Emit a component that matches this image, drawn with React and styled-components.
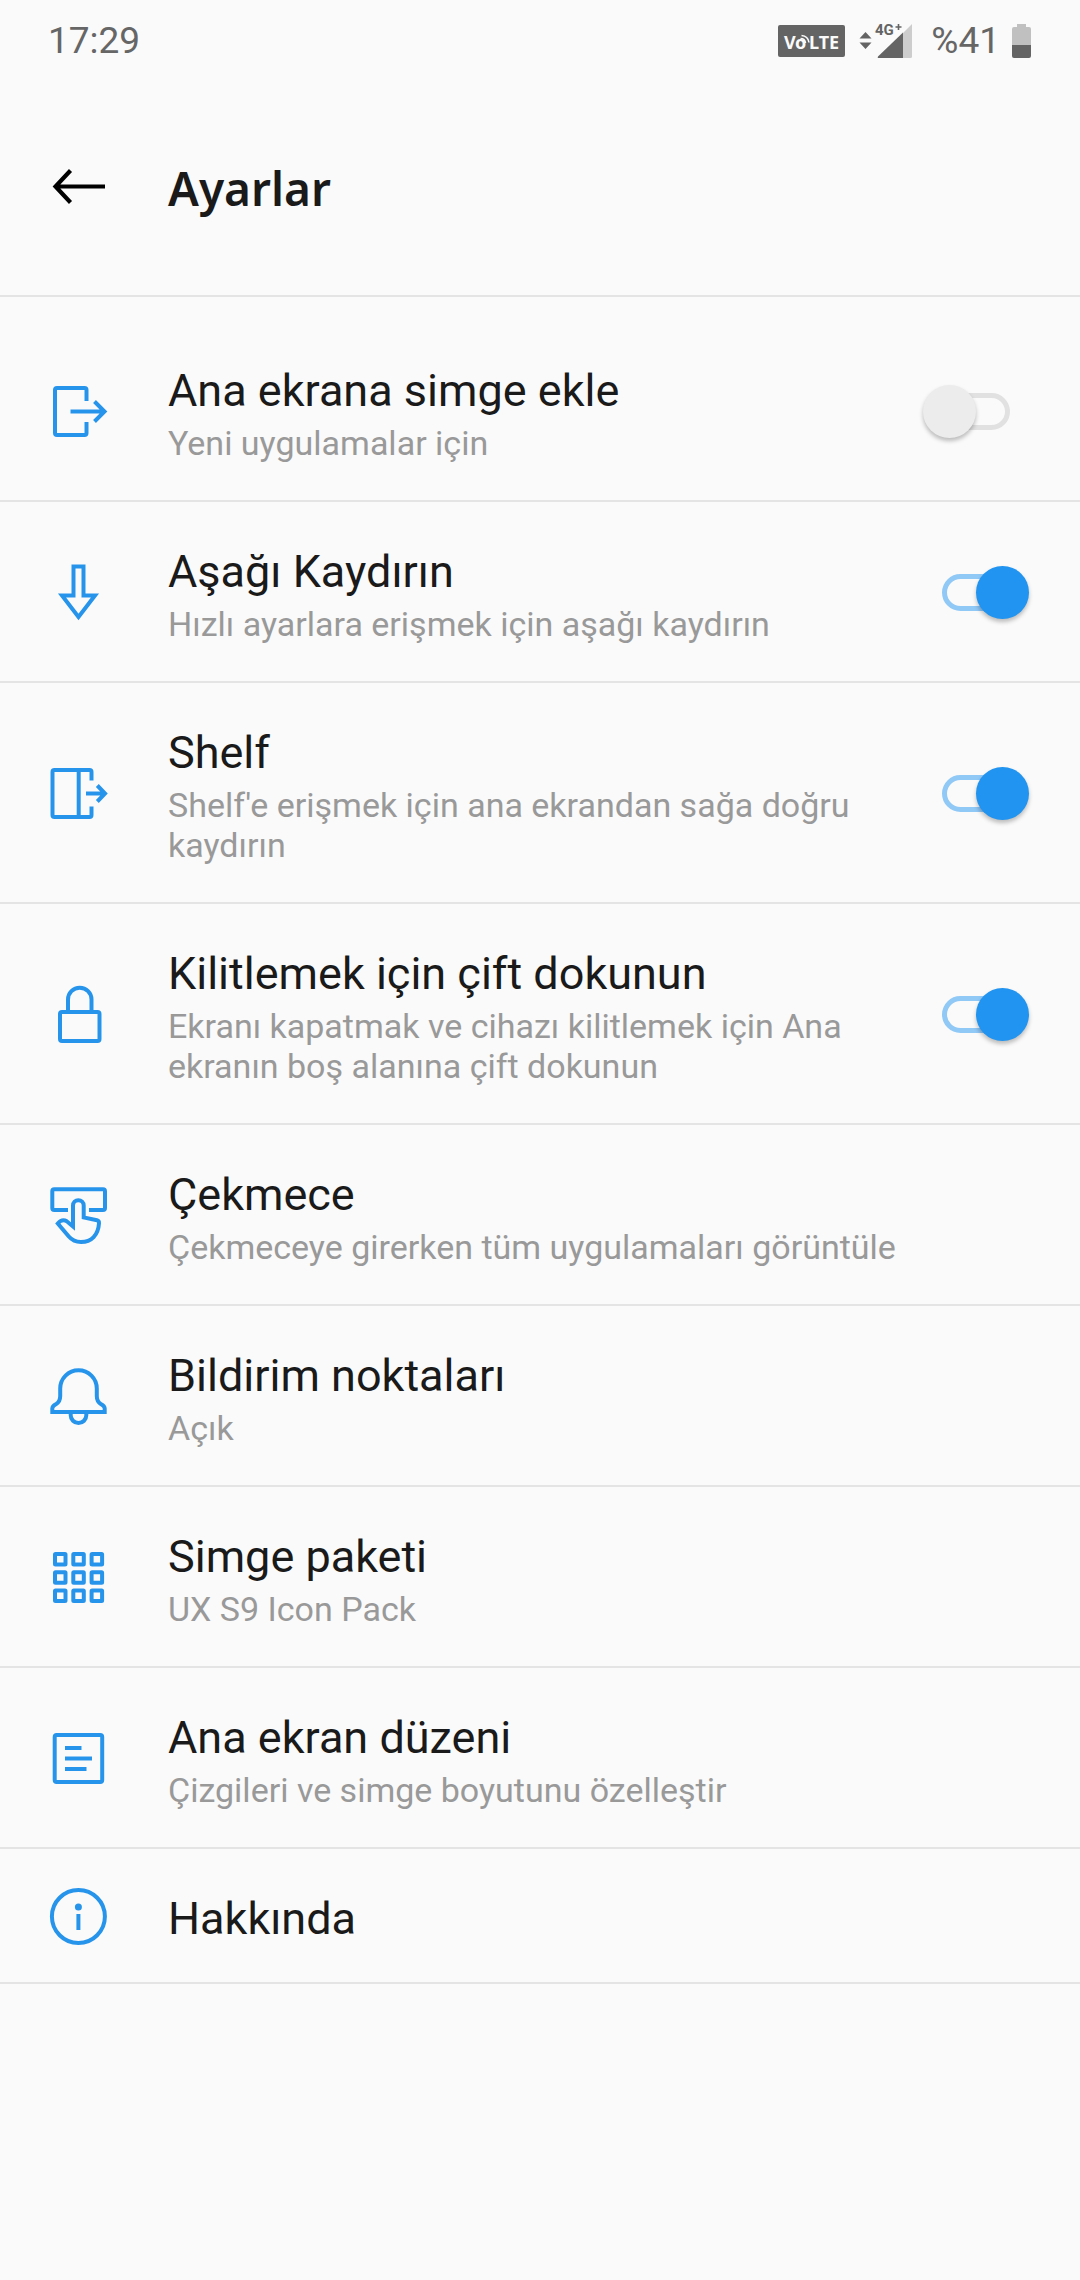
import { useState } from "react";
import styled, { createGlobalStyle } from "styled-components";

const settings = [
  {
    id: "add-icon",
    icon: "exit",
    title: "Ana ekrana simge ekle",
    summary: "Yeni uygulamalar için",
    toggle: true,
    enabled: false,
  },
  {
    id: "swipe-down",
    icon: "arrowDown",
    title: "Aşağı Kaydırın",
    summary: "Hızlı ayarlara erişmek için aşağı kaydırın",
    toggle: true,
    enabled: true,
  },
  {
    id: "shelf",
    icon: "shelf",
    title: "Shelf",
    summary: "Shelf'e erişmek için ana ekrandan sağa doğru kaydırın",
    toggle: true,
    enabled: true,
  },
  {
    id: "double-tap",
    icon: "lock",
    title: "Kilitlemek için çift dokunun",
    summary:
      "Ekranı kapatmak ve cihazı kilitlemek için Ana ekranın boş alanına çift dokunun",
    toggle: true,
    enabled: true,
  },
  {
    id: "drawer",
    icon: "drawer",
    title: "Çekmece",
    summary: "Çekmeceye girerken tüm uygulamaları görüntüle",
  },
  {
    id: "dots",
    icon: "bell",
    title: "Bildirim noktaları",
    summary: "Açık",
  },
  {
    id: "icon-pack",
    icon: "grid",
    title: "Simge paketi",
    summary: "UX S9 Icon Pack",
  },
  {
    id: "layout",
    icon: "layout",
    title: "Ana ekran düzeni",
    summary: "Çizgileri ve simge boyutunu özelleştir",
  },
  { id: "about", icon: "info", title: "Hakkında" },
];

const gridOffsets = [10, 28.3, 46.6];

const iconShapes = {
  exit: (
    <>
      <path d="M41.5 24V13q0-2-2-2H12q-2 0-2 2v43q0 2 2 2h27.500q2 0 2-2V45" />
      <path d="M25.500 34.500H59.500M49.500 24.500L59.500 34.500L49.500 44.500" />
    </>
  ),
  arrowDown: <path d="M28.500 8.500h10v29H50L33.500 59L17 37.500h11.500z" />,
  shelf: (
    <>
      <path d="M46.500 21.500V13q0-2-2-2h-35q-2 0-2 2v43q0 2 2 2h35q2 0 2-2v-8.500M33.700 11v47" />
      <path d="M41 34.500H59.500M52.300 26.500L60 34.500L52.300 42.500" />
    </>
  ),
  lock: (
    <>
      <rect x="15" y="32" width="39.500" height="29" rx="2" />
      <path d="M23 32V19.500a11.750 11.750 0 0 1 23.500 0V32" />
    </>
  ),
  drawer: (
    <>
      <path d="M23 29H9.300q-2 0-2-2V10.300q0-2 2-2H58q2 0 2 2V27q0 2-2 2H44" />
      <path d="M28 45.500V24.500a5.300 5.300 0 0 1 10.700 0V36.500L52 39.300q2.200.5 2 3C53.200 54 46.500 61 36 61c-5 0-9.200-2-12.200-5.500L12.800 42.500q4.200-5 9-2.200z" />
    </>
  ),
  bell: (
    <>
      <path d="M15.200 26.500V34q0 5.500-4 8q-3.900 2-3.900 4.500V50H59.700V46.500q0-2.500-3.900-4.500q-4-2.500-4-8V26.500a18.300 18.300 0 0 0-36.600 0z" />
      <path d="M25.700 51v2.200a7.800 7.800 0 0 0 15.600 0V51" />
    </>
  ),
  grid: gridOffsets.map((y) =>
    gridOffsets.map((x) => (
      <rect key={`${x}-${y}`} x={x} y={y + 1} width="10.500" height="10.500" rx="0.500" />
    ))
  ),
  layout: (
    <>
      <rect x="9.700" y="11" width="47.500" height="47" rx="2" />
      <path d="M20 24h16.500M20 34.500h27M20 45h21.500" />
    </>
  ),
  info: (
    <>
      <circle cx="33.400" cy="34.500" r="26.500" />
      <path d="M33.400 32v16" />
      <circle cx="33.400" cy="25" r="3.500" fill="currentColor" stroke="none" />
    </>
  ),
};

function StatusIcons() {
  return (
    <StyledStatusGroup>
      <svg width="67" height="34" viewBox="0 0 67 34" role="img" aria-label="VoLTE">
        <rect x="0" y="1" width="67" height="32" rx="2" fill="#646464" />
        <StyledVolteText x="6" y="25">V</StyledVolteText>
        <StyledVolteText x="17" y="25">o</StyledVolteText>
        <StyledVolteText x="31" y="25">LTE</StyledVolteText>
        <path
          d="M22.500 14.500q4.500 0 5 4.500M23.500 11.500q6.500 .5 7.500 7"
          fill="none"
          stroke="#fafafa"
          strokeWidth="1.600"
        />
      </svg>
      <StyledSignal width="53" height="44" viewBox="0 -4 53 44" role="img" aria-label="4G+">
        <path d="M6.500 9l6 6.500h-12zM6.500 26l6-6.500h-12z" fill="#646464" />
        <path d="M53 1v32.500q0 1.500-1.500 1.500H44V10z" fill="#cdcdcd" />
        <path d="M44 9.500V35H20q-2 0-1-1.500z" fill="#646464" />
        <StyledNetworkText x="16" y="12">4G</StyledNetworkText>
        <path d="M39.500 1v6M36.500 4h6" stroke="#646464" strokeWidth="1.600" />
      </StyledSignal>
      <StyledStatusText>%41</StyledStatusText>
      <StyledBattery width="19" height="34" viewBox="0 0 19 34" role="img" aria-label="Pil">
        <path d="M5 0h9v3h3q2 0 2 2v16H0V5q0-2 2-2h3z" fill="#c0c0c0" />
        <path d="M0 21h19v11q0 2-2 2H2q-2 0-2-2z" fill="#646464" />
      </StyledBattery>
    </StyledStatusGroup>
  );
}

function SettingItem({ setting, checked, onToggle }) {
  const content = (
    <>
      <StyledIcon viewBox="0 0 66 67" aria-hidden="true">
        {iconShapes[setting.icon]}
      </StyledIcon>
      <StyledItemText>
        <StyledItemTitle>{setting.title}</StyledItemTitle>
        {setting.summary && <StyledItemSummary>{setting.summary}</StyledItemSummary>}
      </StyledItemText>
    </>
  );

  if (!setting.toggle) {
    return <StyledRow type="button">{content}</StyledRow>;
  }

  return (
    <StyledRow as="label" htmlFor={setting.id}>
      {content}
      <StyledSwitch
        id={setting.id}
        type="checkbox"
        role="switch"
        checked={checked}
        onChange={() => onToggle(setting.id)}
      />
    </StyledRow>
  );
}

export default function App() {
  const [enabled, setEnabled] = useState(
    Object.fromEntries(settings.map(({ id, enabled }) => [id, Boolean(enabled)]))
  );

  function handleToggle(id) {
    setEnabled({ ...enabled, [id]: !enabled[id] });
  }

  return (
    <>
      <GlobalStyle />
      <StyledStatusBar>
        <StyledStatusText>17:29</StyledStatusText>
        <StatusIcons />
      </StyledStatusBar>
      <StyledHeader>
        <StyledBackButton type="button" aria-label="Geri">
          <svg width="66" height="66" viewBox="0 0 66 66">
            <path
              d="M60 31.500H11M25.500 15.500L10.500 31.500L25.500 47.500"
              fill="none"
              stroke="#000"
              strokeWidth="4.200"
            />
          </svg>
        </StyledBackButton>
        <StyledHeadline>Ayarlar</StyledHeadline>
      </StyledHeader>
      <main>
        <StyledList>
          {settings.map((setting) => (
            <StyledListItem key={setting.id}>
              <SettingItem
                setting={setting}
                checked={enabled[setting.id]}
                onToggle={handleToggle}
              />
            </StyledListItem>
          ))}
        </StyledList>
      </main>
    </>
  );
}

const GlobalStyle = createGlobalStyle`
  *,
  *::before,
  *::after {
    box-sizing: border-box;
  }

  body {
    margin: 0;
    min-height: 100vh;
    background: #fafafa;
    color: #1a1a1a;
    font-family: Roboto, sans-serif;
  }
`;

const StyledStatusBar = styled.div`
  display: flex;
  justify-content: space-between;
  align-items: center;
  height: 82px;
  padding: 0 49px 0 48px;
`;

const StyledStatusGroup = styled.div`
  display: flex;
  align-items: center;
`;

const StyledStatusText = styled.span`
  color: #666;
  font-size: 37px;
  line-height: 44px;
`;

const StyledVolteText = styled.text`
  fill: #fafafa;
  font-family: "Noto Sans", sans-serif;
  font-size: 18px;
  font-weight: 700;
`;

const StyledNetworkText = styled.text`
  fill: #646464;
  font-size: 15px;
  font-weight: 700;
`;

const StyledSignal = styled.svg`
  margin: 0 19px 0 14px;
`;

const StyledBattery = styled.svg`
  margin-left: 12px;
`;

const StyledHeader = styled.header`
  display: flex;
  align-items: center;
  gap: 57px;
  padding: 73px 45px 74px;
  border-bottom: 2px solid #e4e4e4;
`;

const StyledBackButton = styled.button`
  display: flex;
  padding: 0;
  border: none;
  background: none;
  cursor: pointer;
`;

const StyledHeadline = styled.h1`
  margin: 0;
  font-family: "Noto Sans", sans-serif;
  font-size: 46px;
  font-weight: 600;
  line-height: 64px;
`;

const StyledList = styled.ul`
  list-style: none;
  margin: 0;
  padding: 24px 0 0;
`;

const StyledListItem = styled.li`
  border-bottom: 2px solid #e4e4e4;
`;

const StyledRow = styled.button`
  display: flex;
  align-items: center;
  width: 100%;
  padding: 0 51px 0 45px;
  border: none;
  background: none;
  color: inherit;
  font: inherit;
  text-align: left;
  cursor: pointer;
`;

const StyledIcon = styled.svg`
  flex: none;
  width: 66px;
  height: 67px;
  margin-right: 57px;
  color: #2794eb;
  fill: none;
  stroke: currentColor;
  stroke-width: 4;
`;

const StyledItemText = styled.span`
  display: flex;
  flex: 1;
  flex-direction: column;
  gap: 6px;
  padding: 44px 24px 37px 0;
`;

const StyledItemTitle = styled.span`
  font-size: 45px;
  line-height: 52px;
`;

const StyledItemSummary = styled.span`
  color: #999;
  font-size: 34px;
  line-height: 40px;
`;

const StyledSwitch = styled.input`
  appearance: none;
  position: relative;
  flex: none;
  width: 106px;
  height: 55px;
  margin: 0;
  cursor: pointer;

  &::before {
    content: "";
    position: absolute;
    top: 10px;
    left: 19px;
    width: 68px;
    height: 37px;
    border: 5px solid #e1e1e1;
    border-radius: 19px;
  }

  &::after {
    content: "";
    position: absolute;
    top: 2px;
    left: 0;
    width: 53px;
    height: 53px;
    border-radius: 50%;
    background: #ececec;
    box-shadow: 0 3px 4px rgba(0, 0, 0, 0.25);
  }

  &:checked::before {
    border-color: #90c8f6;
  }

  &:checked::after {
    left: 53px;
    background: #2094f0;
  }
`;
